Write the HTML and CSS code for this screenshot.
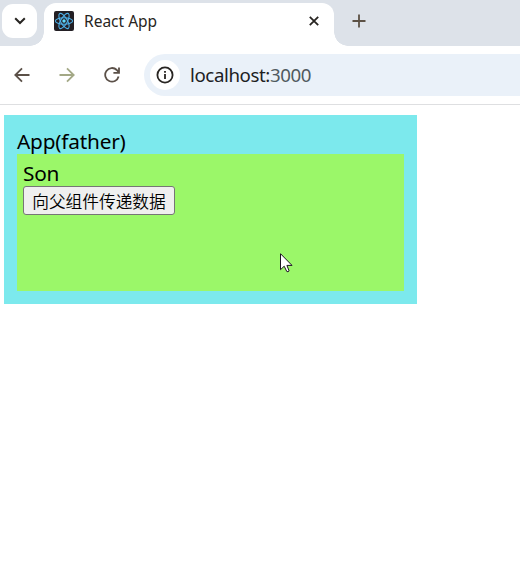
FILE: index.html
```html
<!DOCTYPE html>
<html lang="zh-CN">
<head>
<meta charset="utf-8">
<title>React App</title>
<link rel="stylesheet" href="styles.css">
</head>
<body>
<header class="tab-strip">
  <button class="tab-search" aria-label="Search tabs"><svg width="12" height="8" viewBox="0 0 12 8"><path d="M1.2 1.2 6 6l4.8-4.8" fill="none" stroke="#282522" stroke-width="2"/></svg></button>
  <div class="tab">
    <svg class="favicon" width="20" height="20" viewBox="0 0 20 20"><rect width="20" height="20" rx="2" fill="#231f24"/><g fill="none" stroke="#4eb0e8" stroke-width="1.1"><ellipse cx="10" cy="10" rx="8.6" ry="3.3"/><ellipse cx="10" cy="10" rx="8.6" ry="3.3" transform="rotate(60 10 10)"/><ellipse cx="10" cy="10" rx="8.6" ry="3.3" transform="rotate(120 10 10)"/></g><circle cx="10" cy="10" r="1.7" fill="#61dafb"/></svg>
    <span class="tab-title">React App</span>
    <svg class="close" width="10" height="10" viewBox="0 0 10 10"><path d="M.8.8l8.4 8.4M9.2.8.8 9.2" stroke="#282522" stroke-width="1.8"/></svg>
  </div>
  <svg class="new-tab" width="14" height="14" viewBox="0 0 14 14"><path d="M7 .5v13M.5 7h13" stroke="#5c5145" stroke-width="1.8"/></svg>
</header>
<nav class="toolbar">
  <svg class="nav-icon" width="16" height="16" viewBox="0 0 16 16"><path d="M15.5 8H2M8 1.3 1.3 8 8 14.7" fill="none" stroke="#5b5048" stroke-width="1.8"/></svg>
  <svg class="nav-icon" width="16" height="16" viewBox="0 0 16 16"><path d="M.5 8H14M8 1.3 14.7 8 8 14.7" fill="none" stroke="#a3a886" stroke-width="1.8"/></svg>
  <svg class="nav-icon" width="16" height="16" viewBox="0 0 16 16"><path d="M14.6 9.5A6.8 6.8 0 1 1 12.8 3L14.8 5.4M15 .6V5.8H9.4" fill="none" stroke="#5b5048" stroke-width="1.8"/></svg>
  <div class="address">
    <span class="site-info"><svg width="18" height="18" viewBox="0 0 18 18"><circle cx="9" cy="9" r="7.6" fill="none" stroke="#282522" stroke-width="1.8"/><path d="M9 8v5M9 5v1.8" stroke="#282522" stroke-width="1.8"/></svg></span>
    <span class="url">localhost:<span class="port">3000</span></span>
  </div>
</nav>
<main class="father">
  <div class="father-title">App(father)</div>
  <section class="son">
    <div class="son-title">Son</div>
    <button class="send">向父组件传递数据</button>
  </section>
</main>
<svg class="cursor" width="13" height="20" viewBox="0 0 13 20"><path d="M.5.7v16l3.7-3.5 2.6 5.3q1.3.8 2.3-.6L6.9 12.4H12z" fill="#fff" stroke="#1b1420"/></svg>
</body>
</html>
```
FILE: styles.css
```css
* { box-sizing: border-box; }

body {
  margin: 0;
  background: #fff;
  color: #000;
  font-family: "Noto Sans", "Noto Sans CJK SC", sans-serif;
}

svg { display: block; flex: none; }

.tab-strip {
  display: flex;
  height: 46px;
  padding: 3px 0 0 2px;
  background: #dde2e9;
}

.tab-search {
  display: flex;
  align-items: center;
  justify-content: center;
  width: 35px;
  height: 34px;
  margin-top: 1px;
  padding: 0;
  border: 0;
  border-radius: 11px;
  background: #fff;
}

.tab {
  position: relative;
  display: flex;
  align-items: center;
  width: 290px;
  height: 43px;
  margin-left: 7px;
  padding: 0 15px 7px 10px;
  border-radius: 12px 12px 0 0;
  background: #fff;
}

.tab::before,
.tab::after {
  content: "";
  position: absolute;
  bottom: 0;
  width: 14px;
  height: 14px;
}

.tab::before {
  left: -14px;
  background: radial-gradient(circle at 0 0, transparent 13.5px, #fff 14px);
}

.tab::after {
  right: -14px;
  background: radial-gradient(circle at 100% 0, transparent 13.5px, #fff 14px);
}

.tab-title {
  flex: 1;
  margin-left: 10px;
  color: #282522;
  font-size: 15.5px;
  line-height: 21px;
}

.new-tab { margin: 11px 0 0 18px; }

.toolbar {
  display: flex;
  align-items: center;
  height: 59px;
  padding-left: 14px;
  border-bottom: 1px solid #dedfe1;
}

.nav-icon { margin-right: 29px; }

.address {
  display: flex;
  align-items: center;
  flex: 1;
  height: 42px;
  margin-left: -5px;
  padding-left: 6px;
  border-radius: 21px 0 0 21px;
  background: #eaf1f9;
}

.site-info {
  display: flex;
  align-items: center;
  justify-content: center;
  width: 30px;
  height: 30px;
  border-radius: 50%;
  background: #fff;
}

.url {
  margin-left: 10px;
  color: #20201f;
  font-size: 18.7px;
  letter-spacing: -0.4px;
  line-height: 26px;
}

.port { color: #505a60; }

.father {
  width: 413px;
  height: 189px;
  margin: 10px 0 0 4px;
  padding: 13px;
  background: #7ce9ed;
  font-size: 20.8px;
  letter-spacing: -0.2px;
}

.father-title { height: 26px; line-height: 27px; }

.son {
  height: 137px;
  padding: 6px;
  background: #9bf769;
}

.son-title { height: 26px; line-height: 27px; }

.send {
  display: block;
  width: 152px;
  height: 29px;
  padding: 0;
  border: 1px solid #767676;
  border-radius: 3px;
  background: #efefef;
  color: #000;
  font: 350 16.7px/26px "Noto Sans CJK SC", sans-serif;
  white-space: nowrap;
}

.cursor {
  position: absolute;
  top: 253px;
  left: 280px;
}
```
